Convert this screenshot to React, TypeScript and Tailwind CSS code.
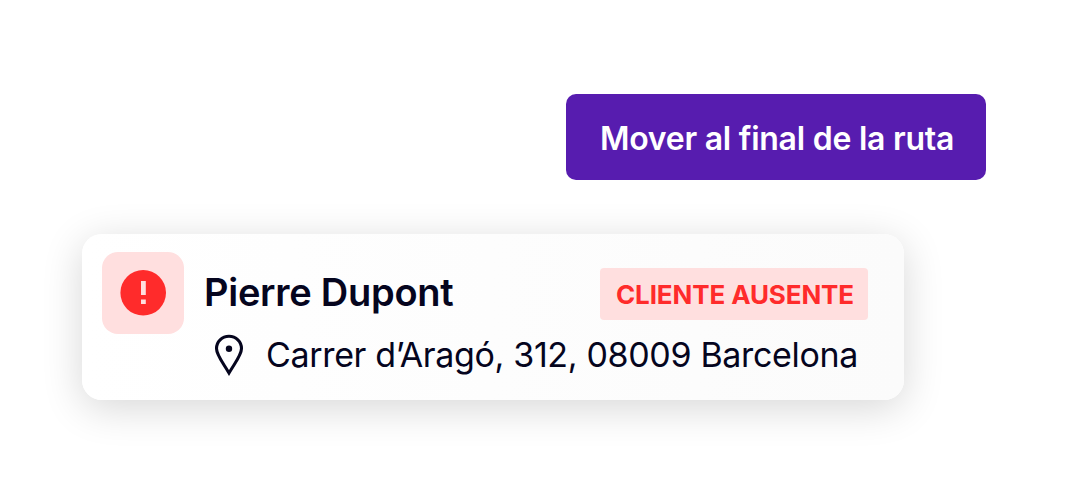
const SHADOW = 'shadow-[0_8px_40px_rgba(0,0,0,0.16)]';

function AlertIcon() {
  return (
    <div className="flex size-[82px] shrink-0 items-center justify-center rounded-[16px] bg-[#ffdfdf]">
      <svg width="46" height="46" viewBox="0 0 46 46" aria-hidden="true">
        <circle cx="23.2" cy="22.800" r="22.800" fill="#ff2b2b" />
        <path d="M21 11h4.800v14H21zM21 29.400h4.800V34H21z" fill="#ffdfdf" />
      </svg>
    </div>
  );
}

function PinIcon() {
  return (
    <svg className="shrink-0" width="30" height="42" viewBox="0 0 30 42" fill="none" aria-hidden="true">
      <path
        d="M15 2.300C8 2.300 2.500 7.500 2.500 14.500c0 6.500 6 13.500 12.500 24.500C21.500 28 27.500 21 27.500 14.500 27.500 7.500 22 2.300 15 2.300Z"
        stroke="#05051e"
        strokeWidth="3.100"
      />
      <circle cx="15" cy="14.800" r="3.200" fill="#05051e" />
    </svg>
  );
}

export default function App() {
  return (
    <main className="flex h-[494px] w-[1068px] flex-col overflow-hidden bg-white px-[82px] pt-[94px] font-['Inter',sans-serif] text-[#05051e]">
      <button className="flex h-[86px] w-[420px] items-center justify-center self-end rounded-[10px] bg-[#571caf] pt-1 pl-[2px] text-[32px] font-semibold tracking-[-0.25px] whitespace-nowrap text-white">
        Mover al final de la ruta
      </button>
      <article className={`mt-[54px] flex h-[166px] w-[822px] rounded-[20px] bg-linear-to-r from-white to-[#fbfbfb] pt-[18px] pl-5 ${SHADOW}`}>
        <AlertIcon />
        <div className="ml-5 flex w-[664px] flex-col">
          <div className="mt-4 flex h-[52px] items-center justify-between">
            <h2 className="pb-1 text-[38px] leading-none font-semibold tracking-[-0.27px] whitespace-nowrap">Pierre Dupont</h2>
            <span className="flex h-[52px] w-[268px] items-center justify-center rounded-[4px] bg-[#ffdfdf] pl-[2px] text-[26px] font-bold tracking-[-0.12px] whitespace-nowrap text-[#ff2b2b]">
              CLIENTE AUSENTE
            </span>
          </div>
          <div className="mt-[14px] flex items-center pl-[10px]">
            <PinIcon />
            <p className="ml-[22px] text-[34px] leading-[40px] tracking-[-0.34px] whitespace-nowrap">Carrer d’Aragó, 312, 08009 Barcelona</p>
          </div>
        </div>
      </article>
    </main>
  );
}
